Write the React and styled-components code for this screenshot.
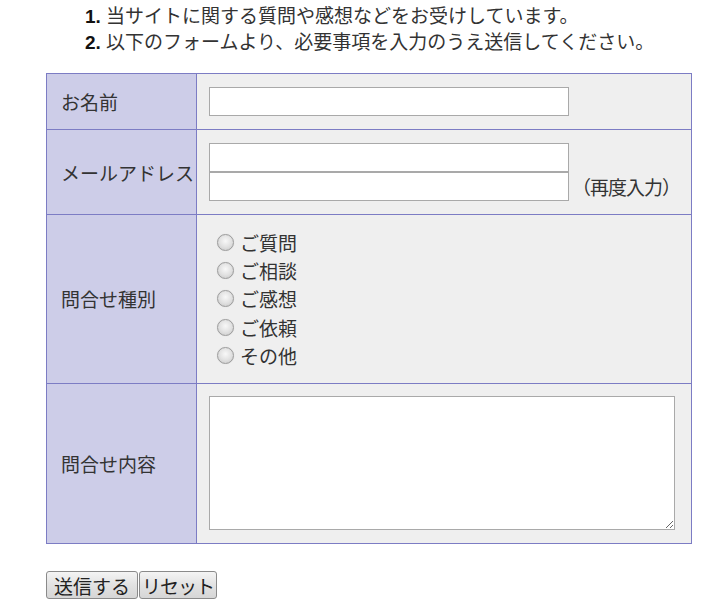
import React from 'react'
import styled, { createGlobalStyle } from 'styled-components'

const GlobalStyle = createGlobalStyle`
  body {
    margin: 0;
    background: #fff;
    color: #333;
    font-family: "Liberation Sans", "Noto Sans CJK JP", sans-serif;
    font-size: 19px;
  }
`

const kinds = ['ご質問', 'ご相談', 'ご感想', 'ご依頼', 'その他']

function App() {
  return (
    <Page>
      <GlobalStyle />
      <Notes>
        <li>当サイトに関する質問や感想などをお受けしています。</li>
        <li>以下のフォームより、必要事項を入力のうえ送信してください。</li>
      </Notes>
      <FormGrid>
        <Label>お名前</Label>
        <Field>
          <TextInput type="text" />
        </Field>

        <Label>メールアドレス</Label>
        <Field>
          <TextInput type="text" />
          <InputRow>
            <TextInput type="text" />
            <Note>（再度入力）</Note>
          </InputRow>
        </Field>

        <Label>問合せ種別</Label>
        <Field>
          {kinds.map((k) => (
            <RadioLabel key={k}>
              <Radio type="radio" name="kind" />
              {k}
            </RadioLabel>
          ))}
        </Field>

        <Label>問合せ内容</Label>
        <Field $top={12}>
          <TextArea />
        </Field>
      </FormGrid>
      <Buttons>
        <Button type="submit" $width={92}>送信する</Button>
        <Button type="reset" $width={78} $tight>リセット</Button>
      </Buttons>
    </Page>
  )
}

export default App

const Page = styled.div`
  padding: 0 0 20px 46px;
  width: 646px;
`

const Notes = styled.ol`
  margin: 4px 0 17px;
  padding-left: 60px;
  line-height: 26px;

  li::marker {
    font-weight: bold;
    color: #111;
  }
`

const FormGrid = styled.div`
  display: grid;
  grid-template-columns: 149px minmax(0, 1fr);
  gap: 1px;
  padding: 1px;
  background: #7c7cc4;
`

const Label = styled.div`
  background: #cdcde8;
  display: flex;
  align-items: center;
  padding-left: 14px;
  white-space: nowrap;
`

const Field = styled.div`
  background: #efefef;
  padding: ${(p) => p.$top || 13}px 12px 13px;
`

const TextInput = styled.input`
  display: block;
  flex: none;
  box-sizing: border-box;
  width: 360px;
  height: 29px;
  margin: 0;
  border: 1px solid #a9a9a9;
  background: #fff;
  font: inherit;
`

const InputRow = styled.div`
  display: flex;
  align-items: center;
  gap: 3px;
`

const Note = styled.span`
  white-space: nowrap;
  letter-spacing: -1px;
`

const RadioLabel = styled.label`
  display: flex;
  align-items: center;
  height: 28.4px;
  padding-left: 8px;
`

const Radio = styled.input`
  appearance: none;
  flex: none;
  box-sizing: border-box;
  width: 17px;
  height: 17px;
  margin: 0 6px 0 0;
  border-radius: 50%;
  border: 1px solid #9c9c9c;
  background: radial-gradient(circle at 50% 40%, #f8f8f8 0%, #e2e2e2 50%, #c6c6c6 100%);
  box-shadow: 0 0 1px rgba(0, 0, 0, 0.15);
`

const TextArea = styled.textarea`
  display: block;
  box-sizing: border-box;
  width: 466px;
  height: 134px;
  margin: 0;
  border: 1px solid #a9a9a9;
  background: #fff;
  font: inherit;
`

const Buttons = styled.div`
  display: flex;
  gap: 1px;
  margin-top: 27px;
`

const Button = styled.button`
  box-sizing: border-box;
  width: ${(p) => p.$width}px;
  height: 28px;
  padding: 0;
  border: 1px solid #8a8a8a;
  border-radius: 3px;
  background: linear-gradient(#f4f4f4, #e2e2e2 50%, #d6d6d6);
  color: #222;
  font: inherit;
  letter-spacing: ${(p) => (p.$tight ? '-1px' : '0')};
  white-space: nowrap;
  cursor: pointer;
`
